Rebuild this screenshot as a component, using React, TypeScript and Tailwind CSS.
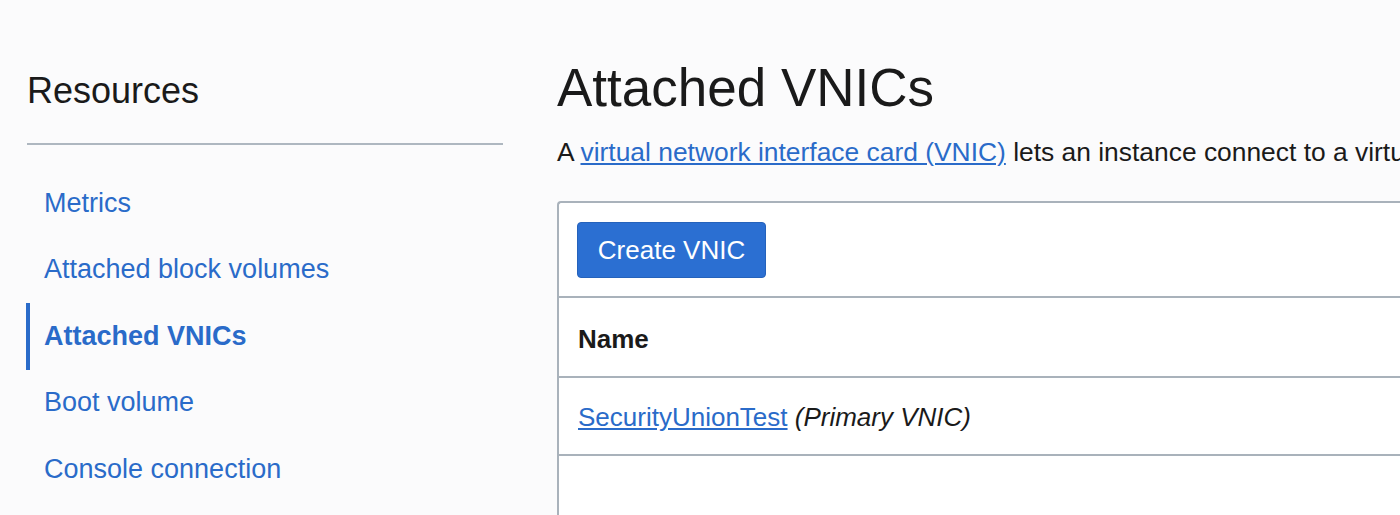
import React from 'react'

const navItems = [
  { label: 'Metrics', active: false },
  { label: 'Attached block volumes', active: false },
  { label: 'Attached VNICs', active: true },
  { label: 'Boot volume', active: false },
  { label: 'Console connection', active: false },
]

const font = { fontFamily: '"Liberation Sans", Arial, sans-serif' }

export default function App() {
  return (
    <div
      className="w-[1400px] h-[515px] overflow-hidden bg-[#fbfbfc] text-[#1a1a1a] flex"
      style={font}
    >
      {/* sidebar */}
      <aside className="w-[477px] ml-[26px] shrink-0 flex flex-col">
        <h2 className="mt-[73px] text-[36px] leading-none font-light pl-px">Resources</h2>
        <div className="mt-[34px] h-[2px] bg-[#aeb7c0] ml-px" />
        <nav className="mt-[25px] flex flex-col">
          {navItems.map(item => (
            <a
              key={item.label}
              href="#"
              className={[
                'h-[66.5px] flex items-center text-[27px] leading-none text-[#2a6bc9] border-l-4',
                item.active ? 'border-[#2a6bc9] font-bold' : 'border-transparent',
              ].join(' ')}
            >
              <span className="pl-[14px]">{item.label}</span>
            </a>
          ))}
        </nav>
      </aside>

      {/* main */}
      <main className="ml-[54px] w-[1100px] shrink-0 flex flex-col">
        <h1 className="mt-[61px] text-[53px] leading-none font-normal">Attached VNICs</h1>
        <p className="mt-[25px] text-[26.4px] leading-[26px] whitespace-nowrap">
          A{' '}
          <a href="#" className="text-[#2a6bc9] underline underline-offset-2">
            virtual network interface card (VNIC)
          </a>{' '}
          lets an instance connect to a virtual cloud network (VCN) and determines how the instance
          connects with endpoints inside and outside the VCN.
        </p>

        <div className="mt-[36px] flex-1 bg-white border-2 border-r-0 border-b-0 border-[#a9b2bb] rounded-tl-[4px]">
          <div className="pl-[18px] pt-[19px] pb-[18px] border-b-2 border-[#a9b2bb]">
            <button className="w-[189px] h-[56px] rounded-[4px] bg-[#2b6fd2] border border-[#2562bb] text-white text-[26px] leading-none">
              Create VNIC
            </button>
          </div>
          <div className="h-[80px] pl-[19px] pt-[3px] flex items-center border-b-2 border-[#a9b2bb]">
            <span className="text-[26px] font-bold leading-none">Name</span>
          </div>
          <div className="h-[78px] pl-[19px] pt-px flex items-center border-b-2 border-[#a9b2bb]">
            <span className="text-[26px] leading-none">
              <a href="#" className="text-[#2a6bc9] underline underline-offset-2">
                SecurityUnionTest
              </a>{' '}
              <em>(Primary VNIC)</em>
            </span>
          </div>
        </div>
      </main>
    </div>
  )
}
